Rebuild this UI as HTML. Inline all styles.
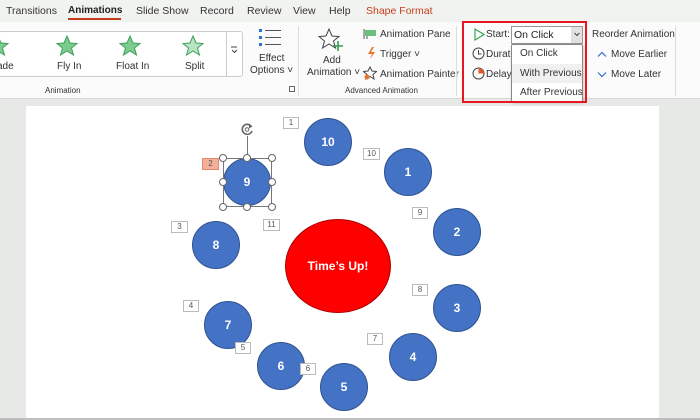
<!DOCTYPE html>
<html><head><meta charset="utf-8"><style>
*{margin:0;padding:0;box-sizing:border-box}
body{width:700px;height:420px;overflow:hidden;background:#e7e9e6;font-family:"Liberation Sans",sans-serif;position:relative;color:#333}
.a{position:absolute;white-space:nowrap}
.t{font-size:10px;color:#333}
.tab{position:absolute;top:5px;font-size:10.5px;color:#333;white-space:nowrap}
.lbl{position:absolute;border:1px solid #bbb;background:#fff;font-size:8px;color:#555;text-align:center;line-height:10px;height:12px}
.c{position:absolute;width:48px;height:48px;border-radius:50%;background:#4472c4;border:1px solid #2f528f;color:#fff;font-weight:bold;font-size:12px;text-align:center;line-height:46px}
.h{position:absolute;width:8px;height:8px;border-radius:50%;background:#fff;border:1px solid #666}
</style></head><body>
<div class="a" style="left:0;top:0;width:700px;height:22px;background:#f1f3f0"></div>
<div class="tab" style="left:6px">Transitions</div>
<div class="tab" style="left:68px;font-weight:bold;color:#222;font-size:10px">Animations</div>
<div class="a" style="left:68px;top:18px;width:53px;height:2px;background:#c43e1c"></div>
<div class="tab" style="left:136px">Slide Show</div>
<div class="tab" style="left:200px">Record</div>
<div class="tab" style="left:247px">Review</div>
<div class="tab" style="left:293px">View</div>
<div class="tab" style="left:329px">Help</div>
<div class="tab" style="left:366px;color:#c43e1c">Shape Format</div>
<div class="a" style="left:0;top:22px;width:700px;height:77px;background:#fbfbfb;border-bottom:1px solid #d8d8d8"></div>
<div class="a" style="left:0;top:31px;width:243px;height:46px;border:1px solid #ccc;border-left:none;background:#fff;border-radius:0 3px 3px 0"></div>
<div class="a" style="left:226px;top:31px;width:17px;height:46px;border-left:1px solid #ccc"></div>
<svg class="a" style="left:230px;top:46px" width="9" height="8"><path d="M1 1h6M2 4l2.5 2.5L7 4" stroke="#444" fill="none"/></svg>
<svg class="a" style="left:0;top:30px" width="230" height="30">
<g fill="#7ccc8e" stroke="#3f9f5a" stroke-width="1">
<path d="M-2 6l3 7 7 .5-5.5 4.5 2 7-6.5-4-6.5 4 2-7-5.5-4.5 7-.5z"/>
<path d="M67 6l3 7 7 .5-5.5 4.5 2 7-6.5-4-6.5 4 2-7-5.5-4.5 7-.5z"/>
<path d="M130 6l3 7 7 .5-5.5 4.5 2 7-6.5-4-6.5 4 2-7-5.5-4.5 7-.5z"/>
<path d="M193 6l3 7 7 .5-5.5 4.5 2 7-6.5-4-6.5 4 2-7-5.5-4.5 7-.5z" fill="#b9e3c2"/>
</g></svg>
<div class="a t" style="left:-3px;top:61px">ade</div>
<div class="a t" style="left:57px;top:61px">Fly In</div>
<div class="a t" style="left:116px;top:61px">Float In</div>
<div class="a t" style="left:185px;top:61px">Split</div>
<div class="a t" style="left:45px;top:86px;font-size:8px">Animation</div>
<div class="a" style="left:289px;top:86px;width:6px;height:6px;border:1px solid #666"></div>
<svg class="a" style="left:258px;top:28px" width="24" height="22"><g fill="#2f6fd0"><rect x="1" y="1" width="3" height="3"/><rect x="1" y="8" width="3" height="3"/><rect x="1" y="15" width="3" height="3"/></g><g stroke="#555"><path d="M7 2.5h16M7 9.5h16M7 16.5h16"/></g></svg>
<div class="a t" style="left:259px;top:53px">Effect</div>
<div class="a t" style="left:250px;top:65px">Options ˅</div>
<div class="a" style="left:298px;top:26px;width:1px;height:70px;background:#ddd"></div>
<svg class="a" style="left:318px;top:27px" width="28" height="26"><path d="M11 2l3 7 7 .5-5.5 4.5 2 7-6.5-4-6.5 4 2-7-5.5-4.5 7-.5z" fill="none" stroke="#444"/><path d="M20 14v10M15 19h10" stroke="#2e9e4f" stroke-width="1.6"/></svg>
<div class="a t" style="left:323px;top:55px">Add</div>
<div class="a t" style="left:307px;top:67px">Animation ˅</div>
<svg class="a" style="left:363px;top:28px" width="14" height="12"><rect x="2" y="2" width="11" height="6" fill="#6bbf7d"/><path d="M1 1v10M4 8v3" stroke="#555"/></svg>
<div class="a t" style="left:380px;top:29px">Animation Pane</div>
<svg class="a" style="left:365px;top:46px" width="12" height="14"><path d="M7 1L3 8h4l-2 5 5-7H6l3-5z" fill="#e8742f"/></svg>
<div class="a t" style="left:380px;top:49px">Trigger ˅</div>
<svg class="a" style="left:363px;top:66px" width="14" height="14"><path d="M7 1l2 4 4.5.5-3.5 3 1 4.5-4-2.5-4 2.5 1-4.5-3.5-3 4.5-.5z" fill="none" stroke="#444"/><circle cx="4" cy="11" r="2.5" fill="#e8742f"/></svg>
<div class="a t" style="left:380px;top:69px">Animation Painter</div>
<div class="a t" style="left:345px;top:86px;font-size:8px">Advanced Animation</div>
<div class="a" style="left:456px;top:26px;width:1px;height:70px;background:#ddd"></div>
<svg class="a" style="left:473px;top:28px" width="12" height="13"><path d="M2 1l9 5.5-9 5.5z" fill="none" stroke="#3aa655" stroke-width="1.2"/></svg>
<div class="a t" style="left:486px;top:29px">Start:</div>
<svg class="a" style="left:472px;top:47px" width="13" height="13"><circle cx="6.5" cy="6.5" r="5.5" fill="none" stroke="#444"/><path d="M6.5 3v4h3" stroke="#444" fill="none"/></svg>
<div class="a t" style="left:486px;top:49px">Durati</div>
<svg class="a" style="left:472px;top:67px" width="13" height="13"><circle cx="6.5" cy="6.5" r="5.5" fill="none" stroke="#444"/><path d="M6.5 6.5V1A5.5 5.5 0 0 1 12 6.5z" fill="#e05a2a"/></svg>
<div class="a t" style="left:486px;top:69px">Delay:</div>
<div class="a" style="left:511px;top:26px;width:72px;height:18px;background:#fff;border:1px solid #999"></div>
<div class="a" style="left:571px;top:27px;width:11px;height:16px;background:#e2e2e2"></div>
<svg class="a" style="left:574px;top:32px" width="6" height="5"><path d="M.5 1l2.5 2.5L5.5 1" stroke="#444" fill="none"/></svg>
<div class="a t" style="left:514px;top:29px;font-size:10.5px;color:#222">On Click</div>
<div class="a" style="left:511px;top:44px;width:72px;height:58px;background:#fff;border:1px solid #888;border-radius:2px;box-shadow:1px 1px 3px rgba(0,0,0,.2)"></div>
<div class="a" style="left:512px;top:64px;width:70px;height:19px;background:#f0f0f0"></div>
<div class="a t" style="left:520px;top:48px">On Click</div>
<div class="a t" style="left:520px;top:68px">With Previous</div>
<div class="a t" style="left:520px;top:87px">After Previous</div>
<div class="a" style="left:462px;top:21px;width:125px;height:82px;border:2px solid #e8161e"></div>
<div class="a t" style="left:592px;top:29px">Reorder Animation</div>
<svg class="a" style="left:597px;top:51px" width="10" height="7"><path d="M1 5.5l4-4 4 4" stroke="#2f6fd0" fill="none" stroke-width="1.2"/></svg>
<div class="a t" style="left:611px;top:49px">Move Earlier</div>
<svg class="a" style="left:597px;top:71px" width="10" height="7"><path d="M1 1.5l4 4 4-4" stroke="#2f6fd0" fill="none" stroke-width="1.2"/></svg>
<div class="a t" style="left:611px;top:69px">Move Later</div>
<div class="a" style="left:675px;top:26px;width:1px;height:70px;background:#ddd"></div>
<div class="a" style="left:26px;top:106px;width:633px;height:312px;background:#fff"></div>
<div class="a" style="left:0;top:418px;width:700px;height:2px;background:#bdbdbd"></div>
<div class="a" style="left:285px;top:219px;width:106px;height:94px;border-radius:50%;background:#f00;border:1px solid #a00;color:#fff;font-weight:bold;font-size:12px;text-align:center;line-height:92px">Time’s Up!</div>
<div class="c" style="left:304px;top:118px">10</div>
<div class="c" style="left:384px;top:148px">1</div>
<div class="c" style="left:433px;top:208px">2</div>
<div class="c" style="left:433px;top:284px">3</div>
<div class="c" style="left:389px;top:333px">4</div>
<div class="c" style="left:320px;top:363px">5</div>
<div class="c" style="left:257px;top:342px">6</div>
<div class="c" style="left:204px;top:301px">7</div>
<div class="c" style="left:192px;top:221px">8</div>
<div class="c" style="left:223px;top:158px">9</div>
<div class="a" style="left:223px;top:158px;width:49px;height:49px;border:1px solid #777"></div>
<div class="a" style="left:247px;top:136px;width:1px;height:22px;background:#777"></div>
<svg class="a" style="left:240px;top:122px" width="15" height="15"><path d="M11 4A5 5 0 1 0 12 9" fill="none" stroke="#666" stroke-width="1.6"/><path d="M9 2l3.5 2.5-3.5 2z" fill="#666"/><circle cx="7" cy="7.5" r="1.8" fill="none" stroke="#666"/></svg>
<div class="h" style="left:219px;top:154px"></div><div class="h" style="left:243px;top:154px"></div><div class="h" style="left:268px;top:154px"></div>
<div class="h" style="left:219px;top:178px"></div><div class="h" style="left:268px;top:178px"></div>
<div class="h" style="left:219px;top:203px"></div><div class="h" style="left:243px;top:203px"></div><div class="h" style="left:268px;top:203px"></div>
<div class="lbl" style="left:283px;top:117px;width:16px">1</div>
<div class="lbl" style="left:363px;top:148px;width:17px">10</div>
<div class="lbl" style="left:412px;top:207px;width:16px">9</div>
<div class="lbl" style="left:171px;top:221px;width:17px">3</div>
<div class="lbl" style="left:263px;top:219px;width:17px">11</div>
<div class="lbl" style="left:412px;top:284px;width:16px">8</div>
<div class="lbl" style="left:183px;top:300px;width:16px">4</div>
<div class="lbl" style="left:367px;top:333px;width:16px">7</div>
<div class="lbl" style="left:235px;top:342px;width:16px">5</div>
<div class="lbl" style="left:300px;top:363px;width:16px">6</div>
<div class="lbl" style="left:202px;top:158px;width:17px;background:#f4b09a;border-color:#e08a70">2</div>
</body></html>
